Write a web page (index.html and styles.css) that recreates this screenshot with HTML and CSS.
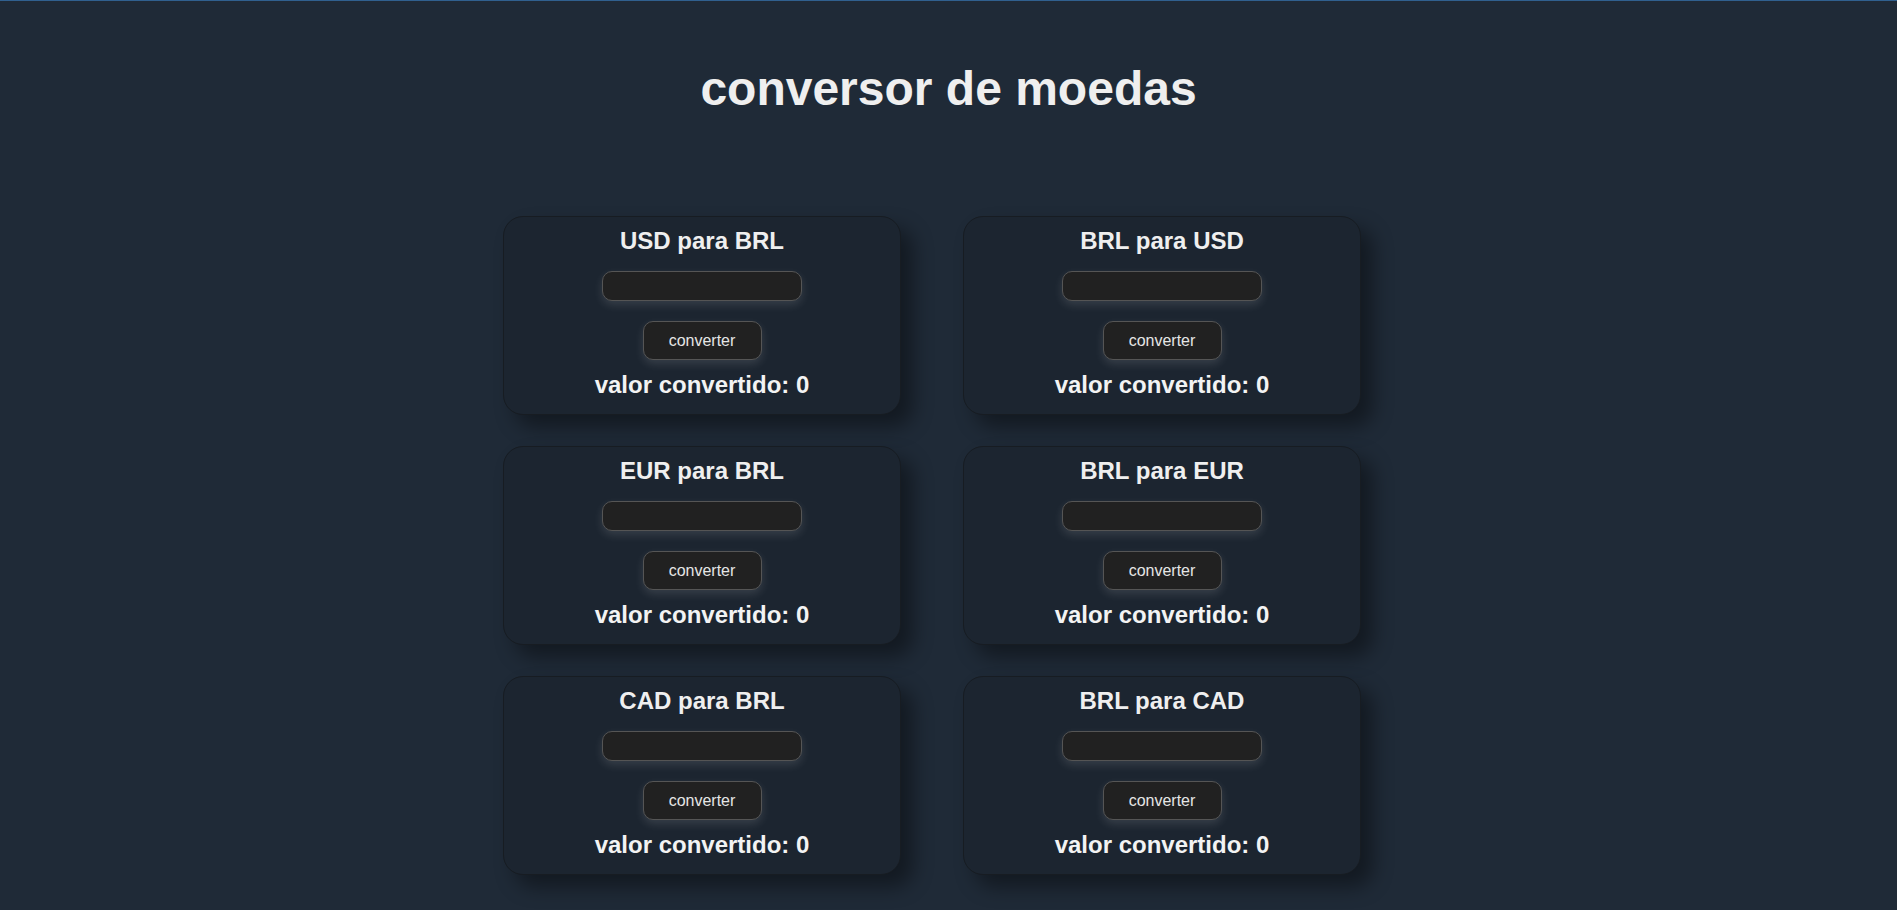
FILE: index.html
```html
<!DOCTYPE html>
<html lang="pt-BR">
<head>
<meta charset="utf-8">
<title>conversor de moedas</title>
<link rel="stylesheet" href="styles.css">
</head>
<body>
<h1 class="title">conversor de moedas</h1>
<main class="grid">
  <section class="card">
    <h2 class="card-title">USD para BRL</h2>
    <input class="field" type="text">
    <button class="btn">converter</button>
    <p class="result">valor convertido: 0</p>
  </section>
  <section class="card">
    <h2 class="card-title">BRL para USD</h2>
    <input class="field" type="text">
    <button class="btn">converter</button>
    <p class="result">valor convertido: 0</p>
  </section>
  <section class="card">
    <h2 class="card-title">EUR para BRL</h2>
    <input class="field" type="text">
    <button class="btn">converter</button>
    <p class="result">valor convertido: 0</p>
  </section>
  <section class="card">
    <h2 class="card-title">BRL para EUR</h2>
    <input class="field" type="text">
    <button class="btn">converter</button>
    <p class="result">valor convertido: 0</p>
  </section>
  <section class="card">
    <h2 class="card-title">CAD para BRL</h2>
    <input class="field" type="text">
    <button class="btn">converter</button>
    <p class="result">valor convertido: 0</p>
  </section>
  <section class="card">
    <h2 class="card-title">BRL para CAD</h2>
    <input class="field" type="text">
    <button class="btn">converter</button>
    <p class="result">valor convertido: 0</p>
  </section>
</main>
</body>
</html>
```
FILE: styles.css
```css
html, body {
  margin: 0;
  padding: 0;
}
html {
  background: #1f2a37;
}
body {
  background: #1f2a37;
  border-top: 1px solid #30608f;
  font-family: "Liberation Sans", Arial, sans-serif;
  color: #f0f0f0;
  overflow: hidden;
}
.title {
  margin: 60px 0 100px;
  font-size: 48px;
  font-weight: bold;
  text-align: center;
  color: #efefef;
}
.grid {
  display: grid;
  grid-template-columns: 431px 431px;
  column-gap: 29px;
  row-gap: 31px;
  justify-content: center;
  padding-bottom: 34px;
}
.card {
  box-sizing: border-box;
  width: 398px;
  background: #1c2530;
  border: 1px solid #171c22;
  border-radius: 20px;
  box-shadow: 12px 12px 20px rgba(0, 0, 0, 0.4);
  padding: 10px 0 15px;
  display: flex;
  flex-direction: column;
  align-items: center;
}
.card-title {
  margin: 0;
  font-size: 24px;
  font-weight: bold;
  color: #efefef;
}
.field {
  box-sizing: border-box;
  width: 200px;
  height: 30px;
  margin-top: 16px;
  background: #212121;
  border: 1px solid #555;
  border-radius: 10px;
  box-shadow: 0 4px 10px rgba(255, 255, 255, 0.12);
  color: #eee;
  outline: none;
}
.btn {
  box-sizing: border-box;
  margin-top: 20px;
  width: 119px;
  height: 39px;
  padding: 0;
  background: #212121;
  border: 1px solid #555;
  border-radius: 10px;
  box-shadow: 0 4px 10px rgba(255, 255, 255, 0.12);
  color: #e6e6e6;
  font-family: "Liberation Sans", Arial, sans-serif;
  font-size: 16px;
}
.result {
  margin: 11px 0 0;
  font-size: 24px;
  font-weight: bold;
  color: #f3f3f3;
}
```
